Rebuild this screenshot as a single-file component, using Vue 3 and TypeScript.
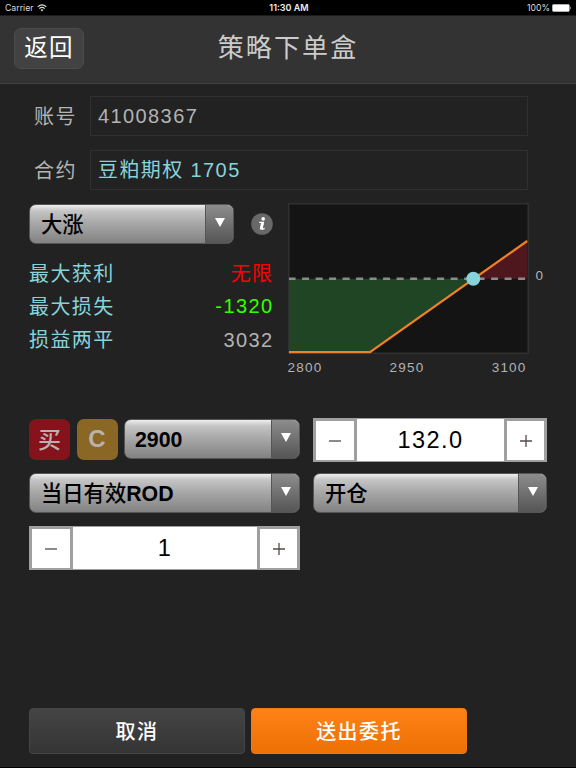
<script setup lang="ts">
import { ref } from 'vue'

interface Stat {
  label: string
  value: string
  tone: string
}

const stats: Stat[] = [
  { label: '最大获利', value: '无限', tone: 'gain' },
  { label: '最大损失', value: '-1320', tone: 'loss' },
  { label: '损益两平', value: '3032', tone: 'plain' },
]
const ticks: string[] = ['2800', '2950', '3100']
const price = ref<number>(132)
const quantity = ref<number>(1)
</script>

<template>
  <div class="screen">
    <div class="status">
      <div class="carrier">
        <span>Carrier</span>
        <svg class="wifi" width="10" height="8" viewBox="0 0 10 8">
          <path d="M0.7 2.8 Q5 -1 9.3 2.8 M2.3 4.6 Q5 2.2 7.7 4.6" fill="none" stroke="#ddd" stroke-width="1.1" />
          <path d="M3.5 5.7 Q5 4.6 6.5 5.7 L5 7.4Z" fill="#ddd" />
        </svg>
      </div>
      <div class="clock">11:30 AM</div>
      <div class="power">
        <span>100%</span>
        <svg width="20" height="8" viewBox="0 0 20 8">
          <rect x="0.5" y="0.5" width="16.8" height="7" rx="1" fill="#fff" stroke="#ccc" stroke-width="0.6" />
          <path d="M18 2.5 Q19.4 4 18 5.5Z" fill="#fff" />
        </svg>
      </div>
    </div>

    <header class="header">
      <button class="back">返回</button>
      <h1 class="title">策略下单盒</h1>
    </header>

    <main class="body">
      <div class="field">
        <label>账号</label>
        <div class="input">41008367</div>
      </div>
      <div class="field second">
        <label>合约</label>
        <div class="input accent">豆粕期权 1705</div>
      </div>

      <section class="strategy">
        <div class="summary">
          <div class="pick">
            <div class="select trend">
              <span class="choice cjk">大涨</span>
              <span class="arrow"><i></i></span>
            </div>
            <svg class="info" width="22" height="22" viewBox="0 0 22 22">
              <circle cx="11" cy="11" r="10.8" fill="#686868" />
              <circle cx="12.2" cy="5.9" r="1.8" fill="#fff" />
              <path d="M8.2 9.4 H12.3 L10.9 15.6 Q10.8 16.6 13.6 15.4" fill="none" stroke="#fff" stroke-width="1.4" />
              <path d="M11.5 9 L10.1 16.4" stroke="#fff" stroke-width="2.7" />
            </svg>
          </div>
          <div v-for="stat in stats" :key="stat.label" class="stat">
            <span class="name">{{ stat.label }}</span>
            <span :class="stat.tone">{{ stat.value }}</span>
          </div>
        </div>

        <div class="chart">
          <div class="plot">
            <svg width="241" height="151" viewBox="0 0 241 151">
              <rect x="0.75" y="0.75" width="239.5" height="149.5" fill="#141414" stroke="#303030" stroke-width="1.5" />
              <path d="M1 75.7 H185.3 L82 148.7 H1Z" fill="#204525" />
              <path d="M185.3 75.7 L239.2 38 V75.7Z" fill="#4d171d" />
              <path d="M1 75.7 H239" stroke="#8b8b8b" stroke-width="2.6" stroke-dasharray="7 6.5" stroke-dashoffset="0.4" />
              <path d="M1 149.2 H82 L239.2 38" fill="none" stroke="#ef8026" stroke-width="2.3" />
              <circle cx="185.3" cy="75.7" r="7" fill="#87d3db" />
            </svg>
            <span class="zero">0</span>
          </div>
          <div class="ticks">
            <span v-for="tick in ticks" :key="tick">{{ tick }}</span>
          </div>
        </div>
      </section>

      <section class="order">
        <div class="leg">
          <span class="tile buy">买</span>
          <span class="tile call">C</span>
          <div class="select">
            <span class="choice figure">2900</span>
            <span class="arrow"><i></i></span>
          </div>
        </div>
        <div class="stepper">
          <button @click="price -= 0.5"><svg width="12" height="12" viewBox="0 0 12 12"><path d="M0 6 H12" stroke="#554a4a" stroke-width="1.3" /></svg></button>
          <span class="amount">{{ price.toFixed(1) }}</span>
          <button @click="price += 0.5"><svg width="12" height="12" viewBox="0 0 12 12"><path d="M0 6 H12 M6 0 V12" stroke="#554a4a" stroke-width="1.3" /></svg></button>
        </div>
        <div class="select">
          <span class="choice"><span class="cjk">当日有效</span>ROD</span>
          <span class="arrow"><i></i></span>
        </div>
        <div class="select">
          <span class="choice cjk">开仓</span>
          <span class="arrow"><i></i></span>
        </div>
        <div class="stepper count">
          <button @click="quantity--"><svg width="12" height="12" viewBox="0 0 12 12"><path d="M0 6 H12" stroke="#554a4a" stroke-width="1.3" /></svg></button>
          <span class="amount">{{ quantity }}</span>
          <button @click="quantity++"><svg width="12" height="12" viewBox="0 0 12 12"><path d="M0 6 H12 M6 0 V12" stroke="#554a4a" stroke-width="1.3" /></svg></button>
        </div>
      </section>

      <footer class="actions">
        <button class="cancel">取消</button>
        <button class="send">送出委托</button>
      </footer>
    </main>
  </div>
</template>

<style>
body {
  margin: 0;
  background: #222;
}
</style>

<style scoped>
* {
  box-sizing: border-box;
}
.screen {
  width: 576px;
  height: 768px;
  display: flex;
  flex-direction: column;
  background: #222;
  border-bottom: 1px solid #000;
  color: #b3b3b3;
  font-family: 'Liberation Sans', 'Noto Sans CJK SC', sans-serif;
  overflow: hidden;
}
button {
  font-family: inherit;
  padding: 0;
  border: 0;
}
.status {
  height: 15px;
  flex: none;
  display: grid;
  grid-template-columns: 1fr auto 1fr;
  align-items: center;
  padding: 1px 4px 0 5px;
  background: #000;
  color: #ddd;
  font: 8.7px/14px Inter, sans-serif;
}
.carrier,
.power {
  display: flex;
  align-items: center;
  gap: 4px;
}
.power {
  justify-content: flex-end;
  gap: 2px;
}
.clock {
  padding-left: 1px;
  font-size: 9px;
  font-weight: 600;
  color: #eee;
}
.header {
  height: 69px;
  flex: none;
  display: grid;
  grid-template-columns: 70px 1fr 70px;
  align-items: center;
  padding: 0 14px 3px;
  background: #333;
  border-top: 1px solid #1c1c1c;
  border-bottom: 1px solid #414141;
}
.back {
  height: 41px;
  border: 1.5px solid #4c4c4c;
  border-radius: 7px;
  background: #424242;
  color: #fff;
  font-size: 23.5px;
  line-height: 37px;
  letter-spacing: 1.2px;
}
.title {
  margin: 0;
  color: #ccc;
  font-size: 26px;
  line-height: 40px;
  font-weight: 400;
  letter-spacing: 2.1px;
  text-align: center;
}
.body {
  flex: 1;
  display: flex;
  flex-direction: column;
  padding: 12px 29px 13px;
}
.field {
  width: 499px;
  height: 40px;
  display: grid;
  grid-template-columns: 61px 1fr;
  align-items: center;
  font-size: 20px;
  letter-spacing: 1.4px;
}
.second {
  margin-top: 14px;
}
.field label {
  padding: 0 0 2px 5px;
}
.input {
  height: 40px;
  padding-left: 7px;
  border: 1.5px solid #303030;
  line-height: 38px;
}
.accent {
  color: #87d3db;
}
.strategy {
  display: flex;
  margin-top: 14px;
  height: 180px;
}
.summary {
  width: 245px;
  margin-right: 14px;
}
.pick {
  display: flex;
  align-items: center;
  justify-content: space-between;
  padding-right: 1px;
  margin-bottom: 13px;
}
.trend {
  width: 205px;
}
.select {
  height: 40px;
  flex: 1;
  display: flex;
  border: 1.5px solid #555;
  border-radius: 7px;
  overflow: hidden;
  background: linear-gradient(#eee 0, #c4c4c4 16%, #aaa 45%, #828282 100%);
  color: #000;
}
.pick .trend {
  flex: none;
}
.choice {
  flex: 1;
  padding-left: 11px;
  font-size: 21.3px;
  font-weight: 700;
  line-height: 36px;
  white-space: nowrap;
}
.figure {
  padding-left: 10px;
  line-height: 41px;
}
.cjk {
  font-family: 'Noto Sans CJK SC', sans-serif;
  font-weight: 500;
}
.arrow {
  width: 28px;
  display: flex;
  justify-content: center;
  border-left: 1px solid #555;
  background: linear-gradient(#8d8d8d, #555);
}
.arrow i {
  width: 0;
  height: 0;
  margin-top: 13px;
  border: 5px solid transparent;
  border-top: 9px solid #fff;
  border-bottom: 0;
}
.stat {
  display: flex;
  justify-content: space-between;
  height: 33px;
  font-size: 20px;
  line-height: 34px;
  letter-spacing: 1.4px;
}
.name {
  color: #87d3db;
}
.gain {
  color: #f00;
}
.loss {
  color: #3f0;
  line-height: 32px;
}
.chart {
  width: 260px;
  margin-top: -1px;
}
.plot {
  display: flex;
  height: 151px;
}
.plot svg {
  flex: none;
}
.zero {
  margin: 65px 0 0 7px;
  font-size: 13.5px;
  line-height: 16px;
}
.ticks {
  width: 239px;
  margin-top: 5px;
  display: flex;
  justify-content: space-between;
  font-size: 13.5px;
  line-height: 18px;
  letter-spacing: 1.2px;
}
.order {
  display: grid;
  grid-template-columns: 271px 234px;
  grid-template-rows: 44px 40px 44px;
  gap: 11px 13px;
  margin-top: 34px;
  width: 518px;
}
.order > .select {
  width: 100%;
}
.leg {
  display: flex;
  gap: 6.5px;
  padding-top: 1px;
}
.tile {
  width: 41px;
  height: 41px;
  border-radius: 7px;
  text-align: center;
  color: #b9b1b1;
  font-size: 24px;
  line-height: 39px;
}
.buy {
  background: #86121c;
  font-family: 'Noto Sans CJK SC', sans-serif;
  font-weight: 500;
  font-size: 23px;
  line-height: 38px;
}
.call {
  background: #8a6724;
  font-weight: 700;
  line-height: 40px;
}
.stepper {
  display: grid;
  grid-template-columns: 44px 1fr 43px;
  height: 44px;
  background: #fff;
  border-top: 1px solid #9da09f;
  border-bottom: 1px solid #9da09f;
}
.count {
  margin-top: 2px;
}
.stepper button {
  display: flex;
  align-items: center;
  justify-content: center;
  border: 3px solid #9da09f;
  border-top-width: 2px;
  border-bottom-width: 2px;
  background: #fff;
}
.amount {
  color: #000;
  text-align: center;
  font-size: 23.5px;
  line-height: 43px;
  letter-spacing: 1.4px;
}
.actions {
  display: flex;
  gap: 6px;
  margin-top: auto;
}
.actions button {
  width: 216px;
  height: 46px;
  border-radius: 4px;
  color: #fff;
  font-family: 'Noto Sans CJK SC', sans-serif;
  font-size: 20px;
  font-weight: 500;
  line-height: 41px;
  padding-bottom: 2px;
  letter-spacing: 1.4px;
}
.cancel {
  background: linear-gradient(#444, #353535);
  border: 1px solid #454545;
}
.send {
  background: linear-gradient(#ff8216, #ec7004);
  border: 1px solid #f37a10;
}
</style>
